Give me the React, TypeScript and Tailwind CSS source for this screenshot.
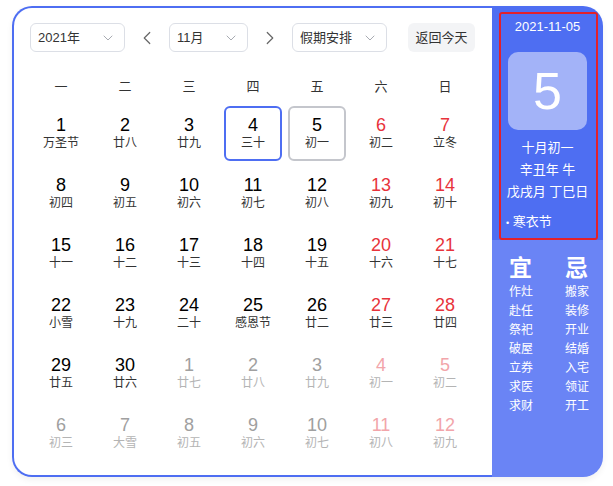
import { ChevronDown, ChevronLeft, ChevronRight } from "lucide-react";

type Day = { n: number; lunar: string; out?: boolean; weekend?: boolean; today?: boolean; selected?: boolean };

const rows: [number, string][][] = [
  [[1, "万圣节"], [2, "廿八"], [3, "廿九"], [4, "三十"], [5, "初一"], [6, "初二"], [7, "立冬"]],
  [[8, "初四"], [9, "初五"], [10, "初六"], [11, "初七"], [12, "初八"], [13, "初九"], [14, "初十"]],
  [[15, "十一"], [16, "十二"], [17, "十三"], [18, "十四"], [19, "十五"], [20, "十六"], [21, "十七"]],
  [[22, "小雪"], [23, "十九"], [24, "二十"], [25, "感恩节"], [26, "廿二"], [27, "廿三"], [28, "廿四"]],
  [[29, "廿五"], [30, "廿六"], [1, "廿七"], [2, "廿八"], [3, "廿九"], [4, "初一"], [5, "初二"]],
  [[6, "初三"], [7, "大雪"], [8, "初五"], [9, "初六"], [10, "初七"], [11, "初八"], [12, "初九"]],
];

const weeks: Day[][] = rows.map((r, ri) =>
  r.map(([n, lunar], ci) => ({
    n,
    lunar,
    out: ri >= 4 && !(ri === 4 && ci < 2),
    weekend: ci >= 5,
    today: ri === 0 && ci === 3,
    selected: ri === 0 && ci === 4,
  }))
);

const yi = ["作灶", "赴任", "祭祀", "破屋", "立券", "求医", "求财"];
const ji = ["搬家", "装修", "开业", "结婚", "入宅", "领证", "开工"];

function Select({ label, width }: { label: string; width: string }) {
  return (
    <div
      className={`flex h-[29px] items-center justify-between rounded-[6px] border border-[#dcdfe6] pl-[7px] pr-[8px] text-[13px] text-[#333] ${width}`}
    >
      <span>{label}</span>
      <ChevronDown className="h-[16px] w-[16px] text-[#a8abb2]" strokeWidth={1.5} />
    </div>
  );
}

function DayCell({ d }: { d: Day }) {
  let numColor = "text-black";
  let lunarColor = "text-[#333]";
  if (d.out) {
    numColor = d.weekend ? "text-[#f2a5aa]" : "text-[#a0a0a0]";
    lunarColor = "text-[#b4b4b4]";
  } else if (d.weekend) {
    numColor = "text-[#e8333b]";
  }
  const border = d.today
    ? "border-2 border-[#4e6ef2]"
    : d.selected
      ? "border-2 border-[#c4c6cc]"
      : "border-2 border-transparent";
  return (
    <div className="flex h-[60px] items-center justify-center">
      <div className={`flex h-[55px] w-[58px] flex-col items-center justify-center rounded-[6px] ${border}`}>
        <span className={`text-[18px] leading-[20px] ${numColor}`}>{d.n}</span>
        <span className={`mt-[1px] text-[12px] leading-[15px] ${lunarColor}`}>{d.lunar}</span>
      </div>
    </div>
  );
}

export default function App() {
  return (
    <div
      className="h-[486px] w-[613px] bg-white pl-[12px] pt-[6px]"
      style={{ fontFamily: '"Liberation Sans", "Noto Sans CJK SC", sans-serif' }}
    >
      <div className="flex h-[471px] w-[591px] rounded-[20px] shadow-[0_3px_6px_rgba(0,0,0,0.06)]">
        <div className="h-full w-[480px] rounded-l-[20px] border-y-2 border-l-2 border-[#4e6ef2] px-[15px] pt-[15px]">
          <div className="flex items-center">
            <Select label="2021年" width="w-[95px] ml-[1px]" />
            <div className="flex w-[44px] justify-center">
              <ChevronLeft className="h-[22px] w-[22px] text-[#666]" strokeWidth={1.3} />
            </div>
            <Select label="11月" width="w-[79px]" />
            <div className="flex w-[44px] justify-center">
              <ChevronRight className="h-[22px] w-[22px] text-[#666]" strokeWidth={1.3} />
            </div>
            <Select label="假期安排" width="w-[95px]" />
            <div className="ml-[21px] flex h-[29px] w-[67px] items-center justify-center rounded-[6px] bg-[#f3f4f6] text-[13px] text-[#333]">
              返回今天
            </div>
          </div>

          <div className="mt-[20px] grid h-[30px] grid-cols-7 items-center text-center text-[13px] text-[#333]">
            {["一", "二", "三", "四", "五", "六", "日"].map((w) => (
              <span key={w}>{w}</span>
            ))}
          </div>

          <div className="mt-[1px] grid grid-cols-7">
            {weeks.flat().map((d, i) => (
              <DayCell key={i} d={d} />
            ))}
          </div>
        </div>

        <div className="relative flex h-full w-[111px] flex-col overflow-hidden rounded-r-[20px] text-white">
          <div className="flex h-[234px] flex-col items-center bg-[#4e6ef2] pt-[12px]">
            <div className="text-[13px] leading-[18px]">2021-11-05</div>
            <div className="mt-[16px] flex h-[78px] w-[79px] items-center justify-center rounded-[10px] bg-[#a3b3f8] text-[52px] leading-none">
              5
            </div>
            <div className="mt-[7px] text-center text-[13px] leading-[22px]">
              <div>十月初一</div>
              <div>辛丑年 牛</div>
              <div>戊戌月 丁巳日</div>
            </div>
            <div className="mt-[10px] w-full pl-[14px] text-[13px] leading-[18px]">
              <span className="text-[9px] align-middle">•</span> 寒衣节
            </div>
          </div>
          <div className="flex flex-1 bg-[#6a84f5] pl-[17px] pt-[13px]">
            <div className="w-[56px]">
              <div className="text-[23px] font-bold leading-[30px]">宜</div>
              {yi.map((t) => (
                <div key={t} className="text-[12px] leading-[19px]">{t}</div>
              ))}
            </div>
            <div>
              <div className="text-[23px] font-bold leading-[30px]">忌</div>
              {ji.map((t) => (
                <div key={t} className="text-[12px] leading-[19px]">{t}</div>
              ))}
            </div>
          </div>
          <div className="pointer-events-none absolute left-[7px] top-[6px] h-[228px] w-[99px] rounded-[3px] border-2 border-[#e3202a]" />
        </div>
      </div>
    </div>
  );
}
